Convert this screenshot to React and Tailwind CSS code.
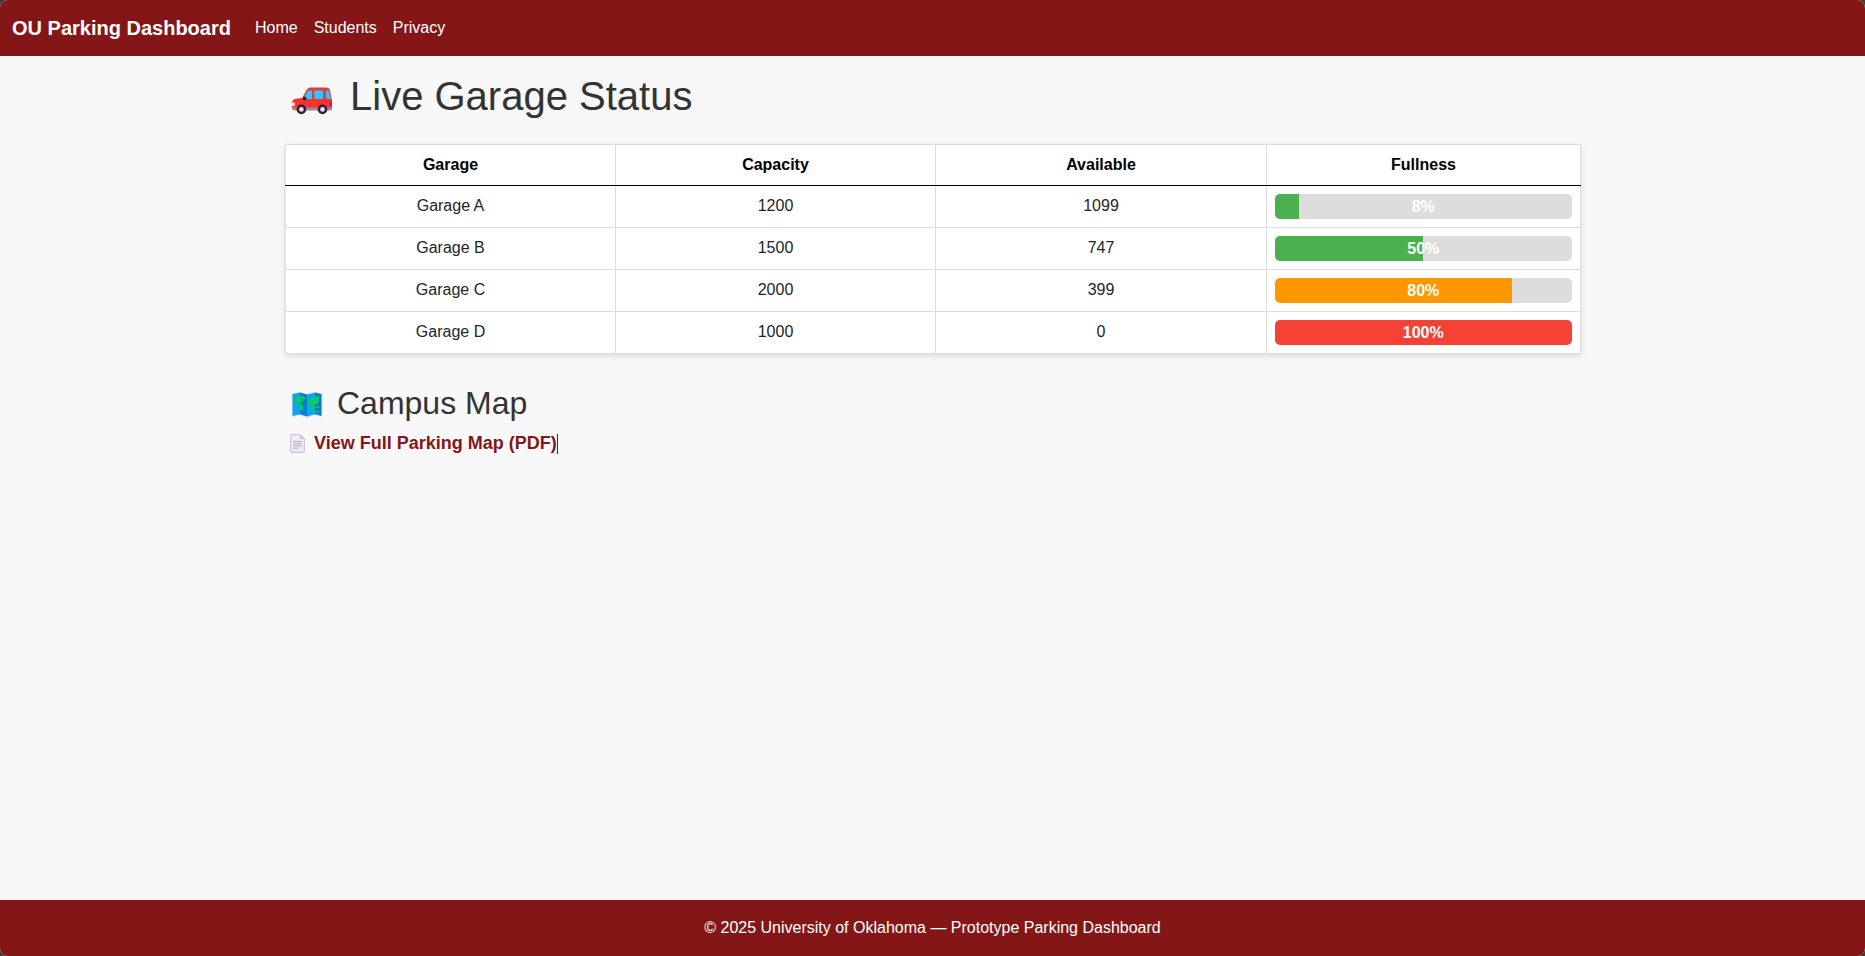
const garages = [
  { name: "Garage A", capacity: 1200, available: 1099, fill: 8, color: "bg-[#4caf50]" },
  { name: "Garage B", capacity: 1500, available: 747, fill: 50, color: "bg-[#4caf50]" },
  { name: "Garage C", capacity: 2000, available: 399, fill: 80, color: "bg-[#ff9800]" },
  { name: "Garage D", capacity: 1000, available: 0, fill: 100, color: "bg-[#f44336]" },
];

function CarIcon() {
  return (
    <svg viewBox="0 0 40 28" className="h-7 w-10" aria-hidden="true">
      <path d="M9 13 14.5 3Q15.8 .5 18.5 .5H34.5Q37.3 .5 38 3L39.6 12V18H9Z" fill="#e23b40" />
      <path d="M0 15.5Q.3 12.2 3.5 11.8L10 11H39.5Q40 13 40 16V22H0Z" fill="#f4322f" />
      <path d="M0 20.5H40V22Q40 23.5 38 23.5H2Q0 23.5 0 21.5Z" fill="#998c92" />
      <path d="M11 12 15.5 4.2Q16.2 3.4 17.5 3.4H20V12H11Z M23.3 3.4H30Q31 3.4 31 4.4V11Q31 12 30 12H23.3Q22.3 12 22.3 11V4.4Q22.3 3.4 23.3 3.4Z M34 3.4H35.5Q36.6 3.4 37 4.7L38.8 12H35.5Q34.4 12 34.3 11Z" fill="#30c6fa" />
      <ellipse cx="12.6" cy="11.5" rx="1.8" ry="2" fill="#2b1c38" />
      <rect x="0" y="15.2" width="2.8" height="4.2" rx="1.3" fill="#fbd9d4" />
      <rect x="37.6" y="14.8" width="2.4" height="4.4" rx="1.1" fill="#c4144c" />
      <circle cx="9.4" cy="22.4" r="4.8" fill="#321b41" />
      <circle cx="9.4" cy="22.4" r="2.3" fill="#f0eaf4" />
      <circle cx="30.5" cy="22.4" r="4.8" fill="#321b41" />
      <circle cx="30.5" cy="22.4" r="2.3" fill="#f0eaf4" />
    </svg>
  );
}

function MapIcon() {
  return (
    <svg viewBox="0 0 32 28" className="h-7 w-8" aria-hidden="true">
      <path d="M.8 3 9 1 16.5 3 24 1 31.5 3V26L24 24 16.5 27 9 24.5 .8 26.5Z" fill="#e1dfe6" />
      <path d="M1.5 3 9 1.5V23.3L1.5 25Z M16 3.5 24 1.5V23.3L16 25.5Z" fill="#0aa5ee" />
      <path d="M9 1.5 16 3.5V25.5L9 23.3Z M24 1.5 30.5 3V25L24 23.3Z" fill="#087dcb" />
      <path d="M3.5 7 6 5.5 9 6 12 5 14.5 7 13 9.5 10.5 11 9 13 12 14.5 12.5 17 10.5 20.5 9 18 8.7 15 6 12.5 4 10Z M17 11 19 9 19.5 7.5 23 6.5 28.5 5 27.5 8 28 11 25.5 13.5 24 12.5 23.5 17 21 20 20 16 17 14.5Z M24.5 15.5 28 15.5V17.3L25 17Z M24.5 19.5 28 20V21.5L25 20.8Z" fill="#0acb68" />
      <path d="M10 7.5 12.3 8 11 9.5Z" fill="#087dcb" />
    </svg>
  );
}

function PageIcon() {
  return (
    <svg viewBox="0 0 15 19" className="h-[19px] w-[15px]" aria-hidden="true">
      <path d="M1.8.7H10L14.3 5V17Q14.3 18.3 13 18.3H1.9Q.7 18.3.7 17.2V1.8Q.7.7 1.8.7Z" fill="#f1ebf7" stroke="#cdc4d6" strokeWidth="1.2" />
      <path d="M10 .8V5H14.2Z" fill="#cfc5d9" />
      <path d="M3 7.5H12M3 9.7H12M3 11.9H12M3 14.1H8.5" stroke="#b0a3bd" strokeWidth="1" />
    </svg>
  );
}

function Cell({ className = "", children }) {
  return <div className={`flex justify-center border-r border-[#dddddd] ${className}`}>{children}</div>;
}

function GarageTable() {
  return (
    <div className="w-[1296px] border-t border-[#dddddd] bg-white text-base leading-6 text-[#212529] shadow-[0_2px_6px_rgba(0,0,0,0.12)]">
      <div className="grid h-[41px] grid-cols-[331px_320px_331px_314px] border-b border-black font-bold text-black">
        {["Garage", "Capacity", "Available", "Fullness"].map((h) => (
          <Cell key={h} className="pt-2 first:border-l">{h}</Cell>
        ))}
      </div>
      {garages.map((g) => (
        <div key={g.name} className="grid h-[42px] grid-cols-[331px_320px_331px_314px] border-b border-[#dddddd]">
          <Cell className="border-l pt-2">{g.name}</Cell>
          <Cell className="pt-2">{g.capacity}</Cell>
          <Cell className="pt-2">{g.available}</Cell>
          <Cell className="py-2 pr-[8.5px] pl-2">
            <div className="relative h-[25px] w-full overflow-hidden rounded-[5px] bg-[#dddddd]">
              <div className={`h-full ${g.color}`} style={{ width: `${g.fill}%` }} />
              <span className="absolute inset-0 text-center leading-[25px] font-bold text-white">{g.fill}%</span>
            </div>
          </Cell>
        </div>
      ))}
    </div>
  );
}

export default function App() {
  return (
    <div className="h-[956px] w-[1865px] bg-[#3d3d3d] font-['Liberation_Sans',Arial,sans-serif]">
      <div className="flex h-full flex-col overflow-hidden rounded-[8px] bg-[#f8f8f8]">
        <header className="flex h-14 shrink-0 items-center bg-[#841617] pl-3 text-white">
          <span className="text-xl font-bold">OU Parking Dashboard</span>
          <nav className="ml-6 flex gap-4 text-base">
            <a>Home</a>
            <a>Students</a>
            <a>Privacy</a>
          </nav>
        </header>
        <main className="ml-[285px] flex grow flex-col items-start text-[#333333]">
          <h1 className="mt-4 flex h-12 items-center pl-[7px] text-[40px] leading-[48px]">
            <span className="pt-2.5"><CarIcon /></span>
            <span className="ml-[18px]">Live Garage Status</span>
          </h1>
          <div className="mt-6"><GarageTable /></div>
          <h2 className="mt-[30px] flex h-[38px] items-center pl-1.5 text-[32px] leading-[38px]">
            <span className="mt-1"><MapIcon /></span>
            <span className="ml-[14px]">Campus Map</span>
          </h2>
          <a className="mt-2 flex h-[27px] items-center pl-[5px] text-lg leading-[27px] font-bold text-[#841617]">
            <span className="pb-px"><PageIcon /></span>
            <span className="ml-[9px]">View Full Parking Map (PDF)</span>
            <span className="h-5 w-px bg-[#841617]" />
          </a>
        </main>
        <footer className="flex h-14 shrink-0 items-center justify-center bg-[#841617] text-base text-white">
          © 2025 University of Oklahoma — Prototype Parking Dashboard
        </footer>
      </div>
    </div>
  );
}
